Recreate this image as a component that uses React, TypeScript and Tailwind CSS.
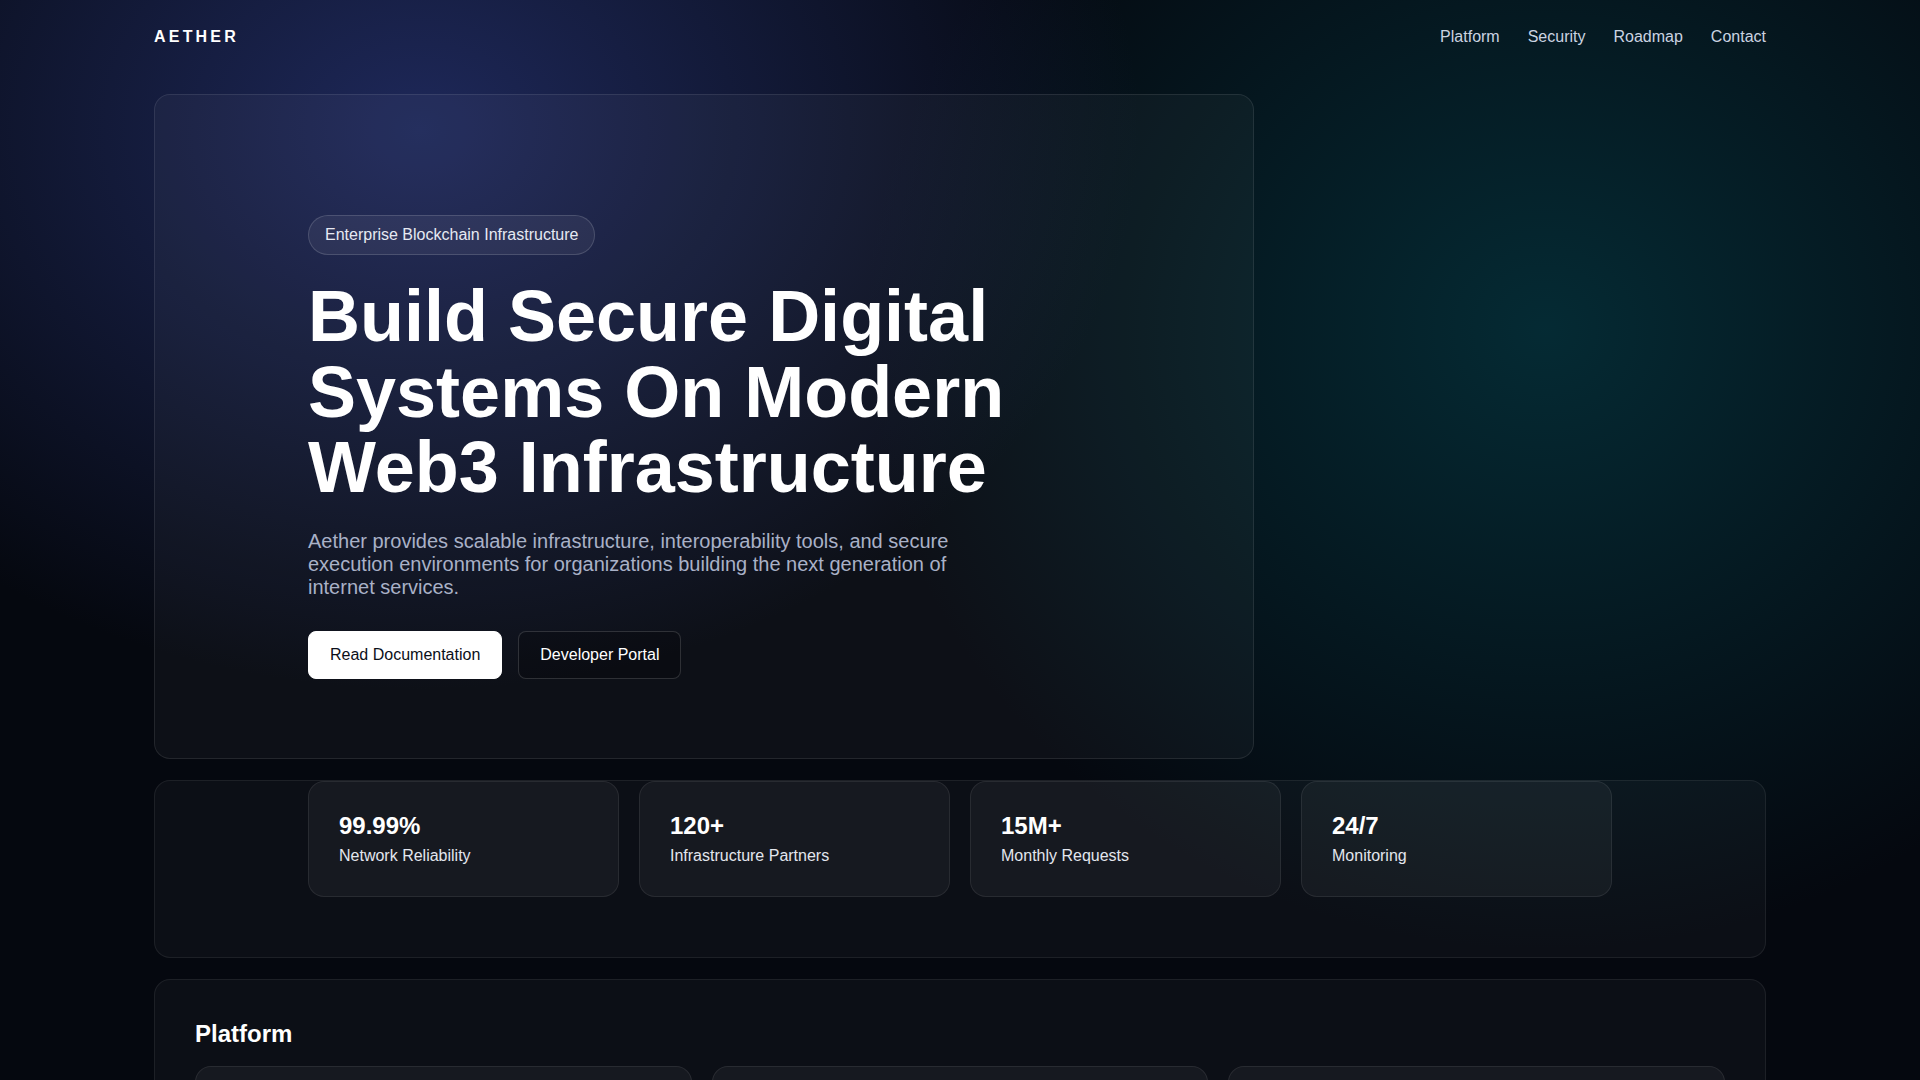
import React from "react";

const stats = [
  { value: "99.99%", label: "Network Reliability" },
  { value: "120+", label: "Infrastructure Partners" },
  { value: "15M+", label: "Monthly Requests" },
  { value: "24/7", label: "Monitoring" },
];

const platformCards = ["execution", "interop", "tooling"];

export default function App() {
  return (
    <div
      className="min-h-screen bg-[#05080f] bg-[radial-gradient(ellipse_720px_560px_at_420px_130px,rgba(36,48,108,0.8),transparent),radial-gradient(ellipse_680px_620px_at_1545px_330px,rgba(5,54,64,0.75),transparent)] text-white"
      style={{ fontFamily: '"Liberation Sans", Arial, sans-serif' }}
    >
      <div className="mx-auto w-full max-w-[1612px] pb-20">
        {/* ── Header ─────────────────────────────── */}
        <header className="flex h-[73px] items-center justify-between">
          <div className="text-base font-bold tracking-[0.2em] text-white">AETHER</div>
          <nav className="flex items-center gap-7 text-base text-[#cbd3e1]">
            <a href="#">Platform</a>
            <a href="#">Security</a>
            <a href="#">Roadmap</a>
            <a href="#">Contact</a>
          </nav>
        </header>

        <main className="flex flex-col gap-[21px] pt-[21px]">
          {/* ── Hero ─────────────────────────────── */}
          <section className="w-[1100px] rounded-2xl border border-white/[0.09] bg-white/[0.035] pl-[153px] pt-[120px] pb-[79px]">
            <span className="inline-block rounded-full border border-white/15 bg-white/[0.06] px-4 py-[7px] text-base leading-6 text-[#e6e9f2]">
              Enterprise Blockchain Infrastructure
            </span>
            <h1 className="mt-6 max-w-[820px] text-[72px] font-bold leading-[1.05] text-white">
              Build Secure Digital Systems On Modern Web3 Infrastructure
            </h1>
            <p className="mt-6 max-w-[700px] text-[20px] leading-[1.15] text-[#a9b1c7]">
              Aether provides scalable infrastructure, interoperability tools, and secure execution
              environments for organizations building the next generation of internet services.
            </p>
            <div className="mt-8 flex gap-4">
              <a
                href="#"
                className="rounded-lg border border-white bg-white px-[21px] py-[11px] text-base leading-6 text-[#0b0f19]"
              >
                Read Documentation
              </a>
              <a
                href="#"
                className="rounded-lg border border-white/15 bg-black/20 px-[21px] py-[11px] text-base leading-6 text-white"
              >
                Developer Portal
              </a>
            </div>
          </section>

          {/* ── Stats ─────────────────────────────── */}
          <section className="rounded-2xl border border-white/[0.07] bg-white/[0.03] pb-[60px]">
            <div className="mx-auto grid w-[1304px] grid-cols-4 gap-5">
              {stats.map((s) => (
                <div
                  key={s.label}
                  className="rounded-2xl border border-white/[0.08] bg-white/[0.045] px-[30px] pt-7 pb-7"
                >
                  <div className="text-2xl font-bold leading-8 text-white">{s.value}</div>
                  <div className="mt-0.5 text-base leading-6 text-[#e3e6ee]">{s.label}</div>
                </div>
              ))}
            </div>
          </section>

          {/* ── Platform ─────────────────────────── */}
          <section className="rounded-2xl border border-white/[0.07] bg-white/[0.03] px-10 pt-[38px] pb-10">
            <h2 className="text-2xl font-bold leading-8 text-white">Platform</h2>
            <div className="mt-4 grid grid-cols-3 gap-5">
              {platformCards.map((id) => (
                <div
                  key={id}
                  className="h-[180px] rounded-2xl border border-white/[0.08] bg-white/[0.045]"
                />
              ))}
            </div>
          </section>
        </main>
      </div>
    </div>
  );
}
